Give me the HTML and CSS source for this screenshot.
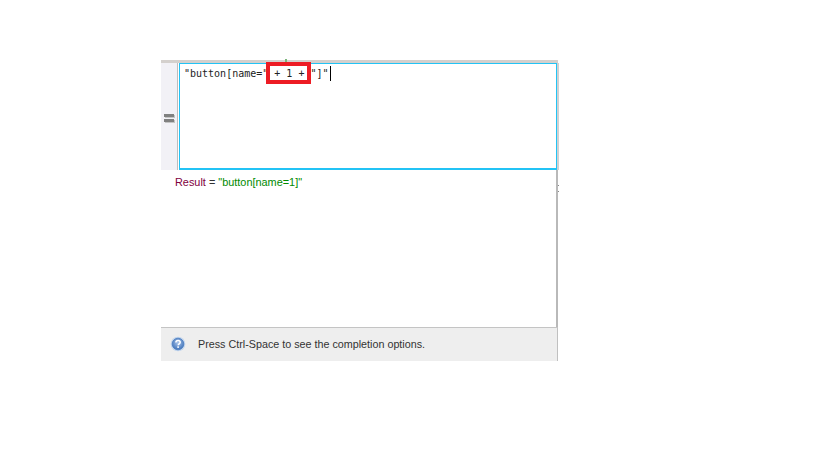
FILE: index.html
```html
<!DOCTYPE html>
<html>
<head>
<meta charset="utf-8">
<title>Expression</title>
<link rel="stylesheet" href="styles.css">
</head>
<body>
<div class="panel">
  <span class="tick"></span>
  <div class="top-row">
    <div class="gutter">
      <span class="grip"></span>
      <span class="grip"></span>
    </div>
    <div class="editor"><span class="code">"button[name="<span class="mark"> + 1 + </span>"]"</span><span class="caret"></span></div>
  </div>
  <div class="result">
    <span class="sash-dots"></span>
    <span class="r-name">Result</span> <span class="r-op">=</span> <span class="r-str">"button[name=1]"</span>
  </div>
  <div class="status">
    <svg class="help" width="16" height="16" viewBox="0 0 16 16">
      <defs>
        <radialGradient id="g" cx="50%" cy="40%" r="60%">
          <stop offset="0" stop-color="#a9c4ea"/>
          <stop offset="1" stop-color="#3f72b8"/>
        </radialGradient>
      </defs>
      <circle cx="8" cy="8" r="7.3" fill="#c3d5ec"/>
      <circle cx="8" cy="8" r="5.8" fill="url(#g)" stroke="#4a7cc0" stroke-width="0.8"/>
      <path d="M5.9 6.4c0-1.3 1-2 2.2-2 1.2 0 2.1.7 2.1 1.8 0 1.6-2 1.6-2 3" fill="none" stroke="#fff" stroke-width="1.5"/>
      <rect x="7.3" y="10.3" width="1.6" height="1.6" fill="#fff"/>
    </svg>
    <span class="status-text">Press Ctrl-Space to see the completion options.</span>
  </div>
</div>
</body>
</html>
```

FILE: styles.css
```css
html, body {
  margin: 0;
  padding: 0;
  background: #fff;
}
.panel {
  position: relative;
  width: 397px;
  height: 301px;
  margin: 60px 0 0 161px;
  display: flex;
  flex-direction: column;
  border-top: 3px solid #d4d0cd;
  box-sizing: border-box;
}
.tick {
  position: absolute;
  left: 124px;
  top: -4px;
  width: 2px;
  height: 3px;
  background: #7cb67c;
}
.top-row {
  display: flex;
  height: 107px;
  margin-right: -1px;
  border-right: 2px solid #d0d0d0;
  box-sizing: border-box;
}
.gutter {
  width: 16px;
  background: #f2f1f6;
  border-right: 1px solid #bdbdbd;
  display: flex;
  flex-direction: column;
  align-items: center;
  justify-content: center;
  gap: 2px;
  padding-top: 3px;
  flex: none;
  box-sizing: content-box;
}
.grip {
  width: 10px;
  height: 3px;
  background: #808080;
  box-shadow: 1px 1px 0 #c4c4c4;
}
.editor {
  flex: 1;
  margin-left: 1px;
  border: 1px solid #23c3f5;
  border-bottom-width: 2px;
  box-sizing: border-box;
  padding: 2px 0 0 4px;
  background: #fff;
  font-family: "DejaVu Sans Mono", monospace;
  font-size: 10px;
  line-height: 16px;
  color: #222;
  white-space: pre;
  display: flex;
  align-items: flex-start;
}
.mark {
  position: relative;
}
.mark::after {
  content: "";
  position: absolute;
  left: -2px;
  right: -1px;
  top: -6px;
  bottom: -5px;
  border: 4px solid #ed1c24;
}
.caret {
  display: inline-block;
  width: 1px;
  height: 15px;
  background: #000;
  margin-left: 1px;
}
.result {
  position: relative;
  height: 157px;
  padding: 5px 0 0 14px;
  border-right: 2px solid #b9b9b9;
  box-sizing: border-box;
  font-family: "Liberation Sans", Arial, sans-serif;
  font-size: 10.9px;
  line-height: 14px;
}
.sash-dots {
  position: absolute;
  right: -3px;
  top: 15px;
  width: 1px;
  height: 5px;
  border-top: 1px solid #888;
  border-bottom: 1px solid #888;
}
.r-name { color: #7f0040; }
.r-op { color: #333; }
.r-str { color: #008a00; }
.status {
  flex: 1;
  display: flex;
  align-items: center;
  gap: 12px;
  padding: 0 0 1px 9px;
  background: #eeeeee;
  border-top: 1px solid #c4c4c4;
  border-right: 1px solid #c0c0c0;
  box-sizing: border-box;
}
.help { flex: none; }
.status-text {
  font-family: "Liberation Sans", Arial, sans-serif;
  font-size: 10.75px;
  color: #333;
}
```
